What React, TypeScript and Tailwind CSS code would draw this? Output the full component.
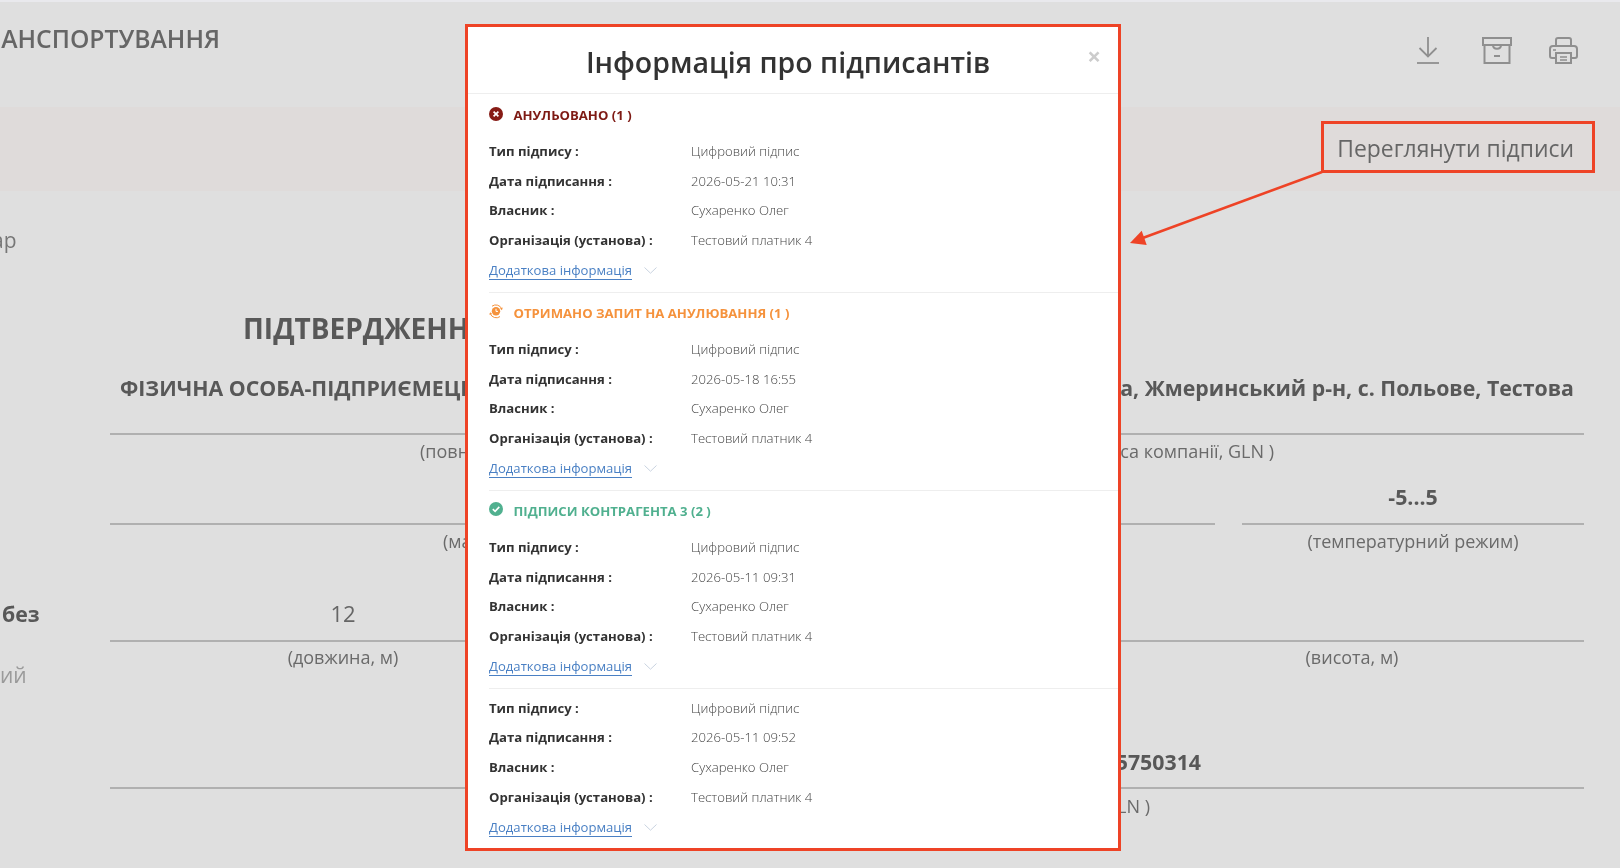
import React from "react";

const Row = ({ label, value }: { label: string; value: string }) => (
  <div className="flex h-[29.7px] items-center text-[13.15px] whitespace-nowrap">
    <div className="w-[202px] font-bold text-[#333333]">{label}</div>
    <div className="font-light text-[#444444]">{value}</div>
  </div>
);

const Chevron = () => (
  <svg width="13" height="7" viewBox="0 0 13 7" fill="none" className="ml-[12px]">
    <path d="M0.5 0.5L6.5 6.2L12.5 0.5" stroke="#c9d3e0" strokeWidth="1" />
  </svg>
);

const Block = ({ date }: { date: string }) => (
  <div className="flex flex-col">
    <Row label="Тип підпису :" value="Цифровий підпис" />
    <Row label="Дата підписання :" value={date} />
    <Row label="Власник :" value="Сухаренко Олег" />
    <Row label="Організація (установа) :" value="Тестовий платник 4" />
    <div className="flex h-[29.7px] items-center">
      <span className="inline-block border-b border-[#4a80c4] text-[13.1px] leading-[18px] text-[#4a80c4]">
        Додаткова інформація
      </span>
      <Chevron />
    </div>
  </div>
);

const Section = ({
  first,
  icon,
  title,
  color,
  date,
}: {
  first?: boolean;
  icon: React.ReactNode;
  title: string;
  color: string;
  date: string;
}) => (
  <div className={first ? "pt-[12px] pb-[6.5px]" : "border-t border-[#eeeeee] pt-[11px] pb-[6.5px]"}>
    <div className="flex h-[20px] items-center">
      <div className="mt-[-5px] w-[24.5px] shrink-0">{icon}</div>
      <div className={`text-[13.15px] font-bold whitespace-nowrap ${color}`}>{title}</div>
    </div>
    <div className="mt-[11px]">
      <Block date={date} />
    </div>
  </div>
);

const Caption = ({ children, className = "" }: { children: React.ReactNode; className?: string }) => (
  <div className={`text-[18px] leading-[24px] whitespace-nowrap text-[#6a6a6a] ${className}`}>{children}</div>
);

const Bold = ({ children, className = "" }: { children: React.ReactNode; className?: string }) => (
  <div className={`text-[21.3px] leading-[30px] font-bold whitespace-nowrap text-[#585858] ${className}`}>{children}</div>
);

const LINE = "border-b-[2px] border-[#b0b0b0]";

export default function App() {
  return (
    <div
      className="relative h-[868px] w-[1620px] overflow-hidden bg-[#dfdfdf]"
      style={{ fontFamily: '"Open Sans", "Noto Sans", sans-serif' }}
    >
      <div className="blur-[0.45px]">
        <div className="h-[2px] bg-[#e9e9ed]" />
        {/* header */}
        <div className="flex h-[105px] justify-between">
          <div className="flex h-[74px] w-[220px] items-center justify-end overflow-hidden">
            <span className="text-[24.7px] font-semibold whitespace-nowrap text-[#666666]">
              АНСПОРТУВАННЯ
            </span>
          </div>
          <div className="flex items-start gap-[37px] pt-[35px] pr-[42px]">
            <svg width="22" height="27" viewBox="0 0 22 27" fill="none" stroke="#8f8f8f" strokeWidth="1.8" className="mr-[6px]">
              <path d="M11 0V19M2.5 11L11 19.5L19.5 11" />
              <path d="M0 26H22" />
            </svg>
            <svg width="30" height="27" viewBox="0 0 30 27" fill="none" stroke="#8f8f8f" strokeWidth="2">
              <rect x="1" y="1" width="28" height="7" />
              <rect x="2.5" y="8" width="25" height="18" />
              <path d="M11 8C11 13 19 13 19 8" />
              <path d="M12 19H18" />
            </svg>
            <svg width="29" height="27" viewBox="0 0 29 27" fill="none" stroke="#8f8f8f" strokeWidth="2">
              <path d="M7 9V3C7 2 8 1 9 1H20C21 1 22 2 22 3V9" />
              <path d="M7 21H3C2 21 1 20 1 19V12C1 10 2.5 9 4 9H25C26.5 9 28 10 28 12V19C28 20 27 21 26 21H22" />
              <rect x="7" y="16" width="15" height="10" />
              <path d="M4 13H7M11 20H18M11 23H18" strokeWidth="1.5" />
            </svg>
          </div>
        </div>
        {/* band */}
        <div className="flex h-[84px] items-center justify-end bg-[#dfdbda] pr-[46px]">
          <span className="text-[22.9px] text-[#666666]">Переглянути підписи</span>
        </div>
        {/* document */}
        <div className="grid grid-cols-[110px_1474px]">
          <div className="flex flex-col">
            <div className="mt-[35px] flex h-[30px] w-[16.5px] items-center justify-end overflow-hidden text-[21px] whitespace-nowrap text-[#777777]">
              ар
            </div>
            <div className="mt-[343px] flex h-[30px] items-center pl-[2px] text-[21.3px] font-bold whitespace-nowrap text-[#585858]">
              без
            </div>
            <div className="mt-[32px] flex h-[30px] items-center text-[21px] whitespace-nowrap text-[#9a9a9a]">
              ий
            </div>
          </div>
          <div className="flex flex-col">
            <div className="mt-[117px] h-[40px] pl-[133px] text-[28px] leading-[40px] font-bold whitespace-nowrap text-[#585858]">
              ПІДТВЕРДЖЕННЯ
            </div>
            <div className={`mt-[25px] flex h-[62px] items-start justify-between px-[10px] ${LINE}`}>
              <Bold>ФІЗИЧНА ОСОБА-ПІДПРИЄМЕЦЬ</Bold>
              <Bold>ка, Жмеринський р-н, с. Польове, Тестова</Bold>
            </div>
            <div className="mx-auto mt-[4px] flex h-[24px] w-[854px] justify-between">
              <Caption>(повне</Caption>
              <Caption>адреса компанії, GLN )</Caption>
            </div>
            <div className="mt-[18px] flex gap-[27px]">
              <div className={`h-[44px] flex-1 ${LINE}`} />
              <div className={`h-[44px] w-[342px] pt-[1px] text-center ${LINE}`}>
                <Bold>-5...5</Bold>
              </div>
            </div>
            <div className="mt-[4px] flex gap-[27px]">
              <div className="flex-1 pl-[333px]">
                <Caption>(ма</Caption>
              </div>
              <div className="w-[342px] text-center">
                <Caption>(температурний режим)</Caption>
              </div>
            </div>
            <div className={`mt-[42px] grid h-[47px] grid-cols-3 ${LINE}`}>
              <div className="w-[466px] pt-[3px] text-center text-[22px] leading-[30px] text-[#666666]">12</div>
            </div>
            <div className="mt-[3px] grid grid-cols-[466px_1fr_464px]">
              <Caption className="text-center">(довжина, м)</Caption>
              <div />
              <Caption className="text-center">(висота, м)</Caption>
            </div>
            <div className={`mt-[76px] flex h-[44px] justify-end pt-[2px] pr-[383px] ${LINE}`}>
              <Bold>5750314</Bold>
            </div>
            <Caption className="mt-[5px] pr-[434px] text-right">GLN )</Caption>
          </div>
        </div>
      </div>

      {/* modal */}
      <div className="absolute top-[24px] left-[465px] h-[827px] w-[656px] overflow-hidden border-[3px] border-[#ee4326] bg-white">
        <div className="blur-[0.3px]">
          <div className="relative flex h-[67px] items-center justify-center border-b border-[#eeeeee] pr-[10px]">
            <div className="mt-[5px] text-[28.5px] font-semibold whitespace-nowrap text-[#333333]">
              Інформація про підписантів
            </div>
            <div className="absolute top-[17px] right-[17px] text-[24px] leading-[24px] font-bold text-[#cccccc]">×</div>
          </div>
          <div className="pl-[21px]">
            <Section
              first
              title="АНУЛЬОВАНО (1 )"
              color="text-[#7e1a14]"
              date="2026-05-21 10:31"
              icon={
                <svg width="14" height="14" viewBox="0 0 14 14">
                  <circle cx="7" cy="7" r="7" fill="#861b15" />
                  <path d="M4.6 4.6L9.4 9.4M9.4 4.6L4.6 9.4" stroke="#fff" strokeWidth="1.7" />
                </svg>
              }
            />
            <Section
              title="ОТРИМАНО ЗАПИТ НА АНУЛЮВАННЯ (1 )"
              color="text-[#f5923c]"
              date="2026-05-18 16:55"
              icon={
                <svg width="15" height="15" viewBox="0 0 15 15" fill="none">
                  <circle cx="7" cy="7.2" r="4.2" fill="#f5923c" />
                  <path d="M7 4.8V7.4H9" stroke="#fff" strokeWidth="1" />
                  <path d="M3 2.2A6.4 6.4 0 0 1 12.8 5" stroke="#f5923c" strokeWidth="1" />
                  <path d="M1.2 9.4A6.4 6.4 0 0 0 11 12.6" stroke="#f5923c" strokeWidth="1" />
                  <path d="M13.8 3.6L12.9 6.2L10.9 4.4Z" fill="#f5923c" />
                  <path d="M0.3 10.8L1.2 8.2L3.2 10Z" fill="#f5923c" />
                </svg>
              }
            />
            <Section
              title="ПІДПИСИ КОНТРАГЕНТА 3 (2 )"
              color="text-[#50b08f]"
              date="2026-05-11 09:31"
              icon={
                <svg width="14" height="14" viewBox="0 0 14 14">
                  <circle cx="7" cy="7" r="7" fill="#50b08f" />
                  <path d="M3.8 7.2L6.1 9.4L10.3 4.9" stroke="#fff" strokeWidth="1.6" fill="none" />
                </svg>
              }
            />
            <div className="border-t border-[#eeeeee] pt-[5px]">
              <Block date="2026-05-11 09:52" />
            </div>
          </div>
        </div>
      </div>

      {/* annotation */}
      <div className="absolute top-[121px] left-[1321px] h-[52px] w-[274px] border-[3px] border-[#ee4326]" />
      <svg className="absolute top-[165px] left-[1125px]" width="200" height="85" viewBox="1125 165 200 85" fill="none">
        <path d="M1322 172L1140 239" stroke="#ee4326" strokeWidth="2.6" />
        <path d="M1130 243L1141.7 230.7L1146.7 245Z" fill="#ee4326" />
      </svg>
    </div>
  );
}
